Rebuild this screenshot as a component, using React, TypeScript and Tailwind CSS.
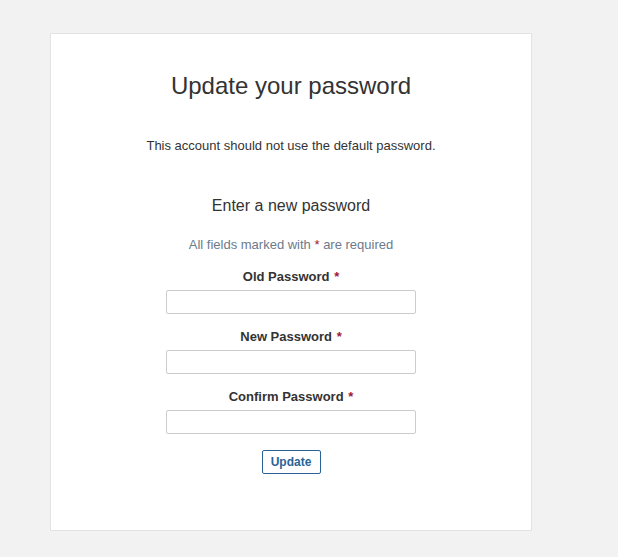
import { useState } from "react";

const Field = (props: { label: string; first?: boolean }) => {
    const [value, setValue] = useState("")
    return (
        <div className={`flex flex-col items-center ${props.first ? "mt-[16px]" : "mt-[15px]"}`}>
            <label className="text-[13px] leading-[16px] font-bold text-[#333]">
                {props.label} <span className="ml-[1px] text-[#a0153e]">*</span>
            </label>
            <input
                type="password"
                className="mt-[5px] w-[250px] h-[24px] border border-[#ccc] rounded-[2px] bg-white px-1 text-[13px] focus:outline-none"
                value={value}
                onChange={(e: any) => setValue(e.currentTarget.value)}
            />
        </div>
    )
}

export default function App() {
    return (
        <div className="min-h-[557px] w-full bg-[#f2f2f2] pt-[33px] pl-[50px] font-['Liberation_Sans',Arial,sans-serif]">
            <div className="w-[482px] h-[498px] bg-white border border-[#e3e3e3] flex flex-col items-center pt-[38px] text-[#333]">
                <h1 className="text-[24px] leading-[28px] font-normal">Update your password</h1>
                <p className="mt-[37px] text-[13px] leading-[17px]">This account should not use the default password.</p>
                <h2 className="mt-[42px] text-[16px] leading-[20px]">Enter a new password</h2>
                <p className="mt-[20px] text-[13px] leading-[17px] text-[#6c7a8c]">
                    All fields marked with <span className="text-[#a0153e]">*</span> are required
                </p>
                <Field label="Old Password" first />
                <Field label="New Password" />
                <Field label="Confirm Password" />
                <button className="mt-[16px] h-[24px] w-[59px] border border-[#2a6496] rounded-[2px] bg-white text-[12px] font-bold text-[#2a6496]">
                    Update
                </button>
            </div>
        </div>
    )
}
